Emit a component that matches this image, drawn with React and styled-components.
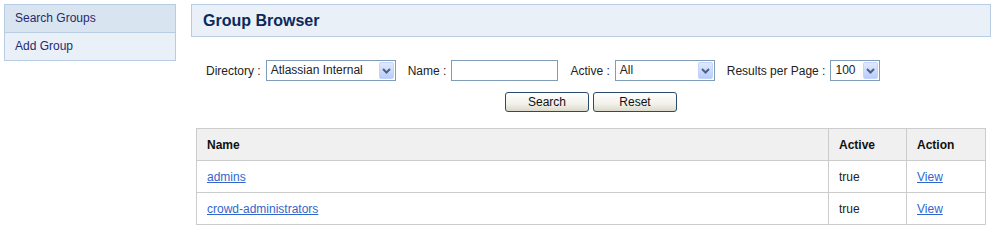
import React from 'react'
import styled, { createGlobalStyle } from 'styled-components'

const GlobalStyle = createGlobalStyle`
  body {
    margin: 0;
    background: #fff;
    font-family: "Liberation Sans", Arial, sans-serif;
    font-size: 12px;
    color: #222;
  }
`

const Page = styled.div`
  display: flex;
  align-items: flex-start;
  gap: 15px;
  padding: 4px 6px 0 4px;
`

const Sidebar = styled.ul`
  list-style: none;
  margin: 0;
  padding: 0;
  width: 170px;
  border: 1px solid #b8cde4;
  flex-shrink: 0;
`

const NavItem = styled.li`
  height: 27px;
  line-height: 27px;
  padding-left: 10px;
  background: ${p => (p.active ? '#d9e4f1' : '#eaf0f8')};
  color: #1f2a6e;
  border-top: ${p => (p.first ? 'none' : '1px solid #b8cde4')};
`

const Main = styled.div`
  flex: 1;
`

const Header = styled.div`
  height: 31px;
  border: 1px solid #b8cde4;
  background: #eaf0f8;
  display: flex;
  align-items: center;
  padding-left: 11px;
`

const Title = styled.h1`
  margin: 0;
  font-size: 16px;
  font-weight: bold;
  color: #0b2a5c;
`

const Filters = styled.div`
  display: flex;
  align-items: center;
  padding: 23px 0 0 15px;
  height: 21px;
`

const Field = styled.div`
  display: flex;
  align-items: center;
  margin-right: 12px;
`

const Label = styled.span`
  margin-right: 5px;
  color: #222;
`

const SelectBox = styled.div`
  box-sizing: border-box;
  width: ${p => p.width}px;
  height: 21px;
  border: 1px solid #7f9db9;
  background: #fff;
  display: flex;
  align-items: center;
  justify-content: space-between;
  padding: 1px;
`

const SelectText = styled.span`
  padding-left: 3px;
  margin-top: -2px;
`

const ArrowBox = styled.span`
  width: 15px;
  height: 17px;
  box-sizing: border-box;
  border: 1px solid #c3d3fd;
  border-radius: 2px;
  background: linear-gradient(#e0e9fd, #b9cdfb);
  display: flex;
  align-items: center;
  justify-content: center;
`

const TextInput = styled.input`
  box-sizing: border-box;
  width: 107px;
  height: 21px;
  border: 1px solid #7f9db9;
  padding: 2px;
  font: inherit;
`

const Buttons = styled.div`
  display: flex;
  justify-content: center;
  gap: 4px;
  margin-top: 11px;
`

const Button = styled.button`
  box-sizing: border-box;
  width: 84px;
  height: 20px;
  border: 1px solid #2b4a6c;
  border-radius: 3px;
  background: linear-gradient(#ffffff, #f2f1ea 60%, #dcd9cc);
  font-family: "Liberation Sans", Arial, sans-serif;
  font-size: 12px;
  color: #111;
  padding: 0;
`

const Table = styled.table`
  margin: 16px 0 0 5px;
  width: 790px;
  border-collapse: collapse;
  border: 1px solid #cccccc;
`

const Th = styled.th`
  height: 31px;
  text-align: left;
  padding: 0 10px;
  background: #f0f0f0;
  border: 1px solid #cccccc;
  font-weight: bold;
  color: #111;
  width: ${p => (p.width ? `${p.width}px` : 'auto')};
`

const Td = styled.td`
  height: 31px;
  padding: 0 10px;
  border: 1px solid #cccccc;
  color: #222;
`

const Link = styled.a`
  color: #3366cc;
  text-decoration: underline;
`

const Chevron = () => (
  <svg width="9" height="6" viewBox="0 0 9 6">
    <path d="M1 1 L4.5 4.5 L8 1" fill="none" stroke="#4d6185" strokeWidth="2" />
  </svg>
)

const Select = ({ width, value }) => (
  <SelectBox width={width}>
    <SelectText>{value}</SelectText>
    <ArrowBox>
      <Chevron />
    </ArrowBox>
  </SelectBox>
)

const groups = [
  { name: 'admins', active: 'true' },
  { name: 'crowd-administrators', active: 'true' }
]

const App = () => (
  <>
    <GlobalStyle />
    <Page>
      <Sidebar>
        <NavItem first active>Search Groups</NavItem>
        <NavItem>Add Group</NavItem>
      </Sidebar>
      <Main>
        <Header>
          <Title>Group Browser</Title>
        </Header>
        <Filters>
          <Field>
            <Label>Directory :</Label>
            <Select width={130} value="Atlassian Internal" />
          </Field>
          <Field>
            <Label>Name :</Label>
            <TextInput type="text" />
          </Field>
          <Field>
            <Label>Active :</Label>
            <Select width={100} value="All" />
          </Field>
          <Field>
            <Label>Results per Page :</Label>
            <Select width={50} value="100" />
          </Field>
        </Filters>
        <Buttons>
          <Button>Search</Button>
          <Button>Reset</Button>
        </Buttons>
        <Table>
          <thead>
            <tr>
              <Th>Name</Th>
              <Th width={57}>Active</Th>
              <Th width={58}>Action</Th>
            </tr>
          </thead>
          <tbody>
            {groups.map(g => (
              <tr key={g.name}>
                <Td><Link href="#">{g.name}</Link></Td>
                <Td>{g.active}</Td>
                <Td><Link href="#">View</Link></Td>
              </tr>
            ))}
          </tbody>
        </Table>
      </Main>
    </Page>
  </>
)

export default App
